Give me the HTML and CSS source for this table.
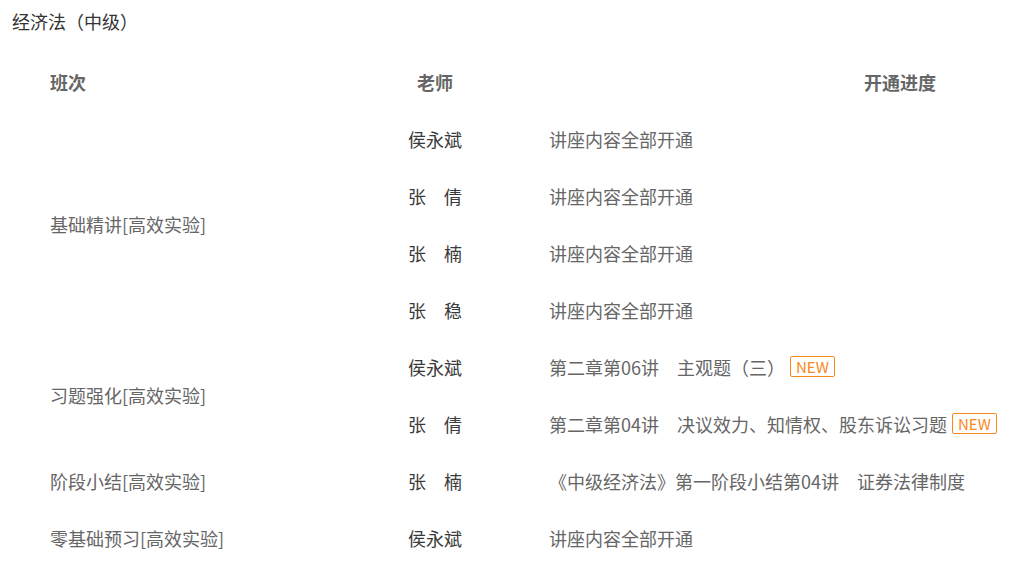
FILE: index.html
```html
<!DOCTYPE html>
<html lang="zh-CN">
<head>
<meta charset="utf-8">
<title>经济法（中级）</title>
<link rel="stylesheet" href="styles.css">
</head>
<body>
<div class="page">
  <h1 class="title">经济法（中级）</h1>
  <div class="table">
    <div class="th th-class">班次</div>
    <div class="th th-teacher">老师</div>
    <div class="th th-progress">开通进度</div>

    <div class="cls span4">基础精讲[高效实验]</div>
    <div class="teacher">侯永斌</div>
    <div class="progress">讲座内容全部开通</div>
    <div class="teacher">张　倩</div>
    <div class="progress">讲座内容全部开通</div>
    <div class="teacher">张　楠</div>
    <div class="progress">讲座内容全部开通</div>
    <div class="teacher">张　稳</div>
    <div class="progress">讲座内容全部开通</div>

    <div class="cls span2">习题强化[高效实验]</div>
    <div class="teacher">侯永斌</div>
    <div class="progress">第二章第06讲　主观题（三）<span class="new">NEW</span></div>
    <div class="teacher">张　倩</div>
    <div class="progress">第二章第04讲　决议效力、知情权、股东诉讼习题<span class="new">NEW</span></div>

    <div class="cls">阶段小结[高效实验]</div>
    <div class="teacher">张　楠</div>
    <div class="progress">《中级经济法》第一阶段小结第04讲　证券法律制度</div>

    <div class="cls">零基础预习[高效实验]</div>
    <div class="teacher">侯永斌</div>
    <div class="progress">讲座内容全部开通</div>
  </div>
</div>
</body>
</html>
```

FILE: styles.css
```css
* { box-sizing: border-box; }
html, body { margin: 0; padding: 0; background: #fff; }
body {
  font-family: "Noto Sans CJK SC", "Noto Sans", sans-serif;
  font-size: 18px;
  color: #333;
}
.page { padding: 8px 0 0 12px; }
.title {
  margin: 0;
  font-size: 18px;
  font-weight: normal;
  line-height: 26px;
  color: #333;
}
.table {
  margin-top: 19px;
  display: grid;
  grid-template-columns: 358px 141px 1fr;
  grid-auto-rows: 57px;
  padding-left: 38px;
}
.table > div {
  display: flex;
  align-items: center;
  white-space: nowrap;
}
.th { font-weight: bold; color: #666; }
.th-teacher { padding-left: 9px; }
.th-progress { padding-left: 315px; }
.cls { color: #666; grid-column: 1; }
.span4 { grid-row: span 4; }
.span2 { grid-row: span 2; }
.teacher { grid-column: 2; color: #3a3a3a; }
.progress { grid-column: 3; color: #666; }
.new {
  display: inline-flex;
  align-items: center;
  justify-content: center;
  margin-left: 5px;
  height: 21px;
  padding: 0 5px;
  border: 1px solid #f7891e;
  border-radius: 2px;
  color: #f7891e;
  font-size: 15px;
  line-height: 19px;
}
```
